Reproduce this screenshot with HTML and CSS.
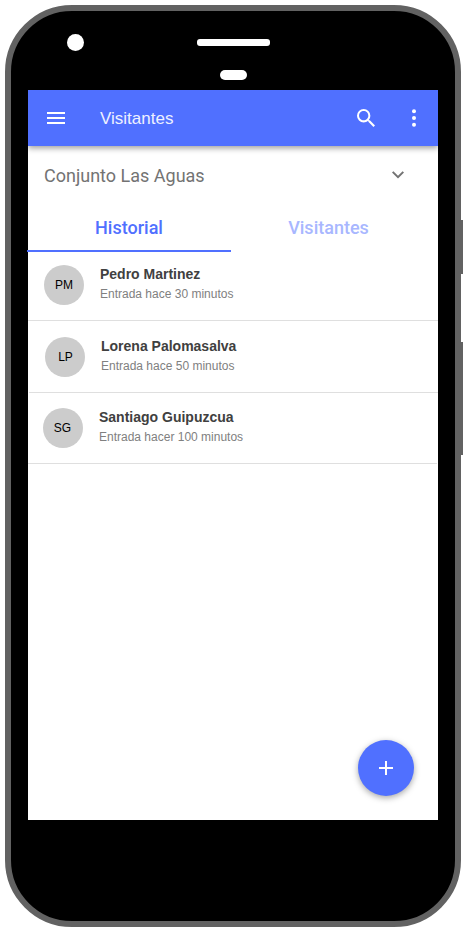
FILE: index.html
```html
<!DOCTYPE html>
<html lang="es">
<head>
<meta charset="utf-8">
<title>Visitantes</title>
<link rel="stylesheet" href="styles.css">
</head>
<body>
<div class="phone">
  <span class="side-button power"></span>
  <span class="side-button volume"></span>
  <span class="camera"></span>
  <span class="speaker"></span>
  <span class="sensor"></span>
  <main class="screen">
    <header class="appbar">
      <svg class="menu" width="18" height="12" viewBox="0 0 18 12"><path fill="#fff" d="M0 0h18v2H0zM0 5h18v2H0zM0 10h18v2H0z"/></svg>
      <h1>Visitantes</h1>
      <svg class="search" width="18" height="18" viewBox="3 3 17.49 17.49"><path fill="#fff" d="M15.5 14h-.79l-.28-.27A6.47 6.47 0 0 0 16 9.5 6.5 6.5 0 1 0 9.5 16c1.61 0 3.09-.59 4.23-1.57l.27.28v.79l5 4.99L20.49 19l-4.99-5zm-6 0C7.01 14 5 11.99 5 9.5S7.01 5 9.5 5 14 7.01 14 9.5 11.99 14 9.5 14z"/></svg>
      <svg class="more" width="4" height="18" viewBox="0 0 4 18"><g fill="#fff"><circle cx="2" cy="2.2" r="2"/><circle cx="2" cy="9" r="2"/><circle cx="2" cy="15.8" r="2"/></g></svg>
    </header>
    <div class="select">
      <span>Conjunto Las Aguas</span>
      <svg width="12" height="8" viewBox="0 0 12 8"><path d="M.7.9 6 6.2 11.3.9" fill="none" stroke="#737373" stroke-width="2"/></svg>
    </div>
    <nav class="tabs">
      <a class="tab active">Historial</a>
      <a class="tab">Visitantes</a>
    </nav>
    <ul class="list">
      <li class="row first"><span class="avatar">PM</span><div><b>Pedro Martinez</b><p>Entrada hace 30 minutos</p></div></li>
      <li class="row second"><span class="avatar">LP</span><div><b>Lorena Palomasalva</b><p>Entrada hace 50 minutos</p></div></li>
      <li class="row third"><span class="avatar">SG</span><div><b>Santiago Guipuzcua</b><p>Entrada hacer 100 minutos</p></div></li>
    </ul>
    <button class="fab" aria-label="Agregar"><svg width="14" height="14" viewBox="0 0 14 14"><path fill="#fff" d="M6 0h2v6h6v2H8v6H6V8H0V6h6z"/></svg></button>
  </main>
</div>
</body>
</html>
```
FILE: styles.css
```css
* { box-sizing: border-box; }
body { margin: 0; padding: 5px; background: #fff; font-family: "Liberation Sans", Arial, sans-serif; overflow: hidden; }
.phone { position: relative; width: 456px; height: 922px; padding: 79px 17px 0; border: 6px solid #626262; border-radius: 67px; background: #000; }
.side-button { position: absolute; right: -8px; width: 2px; background: #626262; }
.power { top: 209px; height: 54px; }
.volume { top: 331px; height: 113px; }
.camera, .speaker, .sensor { position: absolute; background: #fff; }
.camera { left: 56px; top: 23px; width: 17px; height: 17px; border-radius: 50%; }
.speaker { left: 186px; top: 28px; width: 73px; height: 7px; border-radius: 3px; }
.sensor { left: 209px; top: 59px; width: 27px; height: 10px; border-radius: 5px; }
.screen { position: relative; width: 410px; height: 730px; background: #fff; }
.appbar { position: relative; display: flex; align-items: center; height: 56px; padding: 0 22px 0 19px; background: #5070ff; box-shadow: 0 2px 6px rgba(0,0,0,.4); clip-path: inset(0 0 -12px 0); }
.appbar h1 { flex: 1; margin: 0 0 0 35px; padding-top: 2px; font-size: 17px; line-height: 20px; font-weight: 400; color: #eef1ff; }
.search { margin-right: 37px; }
.select { display: flex; justify-content: space-between; align-items: center; height: 60px; padding: 0 34px 0 16px; font: 18px/20px Roboto, sans-serif; color: #737373; }
.select svg { margin-bottom: 2px; }
.tabs { display: flex; height: 46px; margin-left: -1px; }
.tab { width: 204px; height: 46px; padding-top: 12px; text-align: center; font: 500 18px/20px Roboto, sans-serif; color: #a8b7ff; }
.tab:last-child { width: 195px; }
.active { color: #5070ff; border-bottom: 2px solid #5070ff; }
.list { margin: 0; padding: 0; list-style: none; }
.row { display: flex; height: 72px; gap: 16px; border-bottom: 1px solid #dfdfdf; padding: 16px 0 0 16px; }
.first { height: 69px; padding-top: 13px; }
.second { margin-left: 1px; }
.third { height: 71px; margin-right: 1px; padding: 15px 0 0 15px; }
.avatar { width: 40px; height: 40px; border-radius: 50%; background: #ccc; color: #000; font-size: 12px; line-height: 40px; text-align: center; }
.second .avatar { padding-left: 1px; }
.third .avatar { padding-right: 1px; }
.row b { display: block; font-size: 14px; line-height: 18px; color: #404040; }
.row p { margin: 2px 0 0; font-size: 12px; line-height: 18px; color: #808080; }
.fab { position: absolute; right: 24px; bottom: 24px; display: grid; place-items: center; width: 56px; height: 56px; padding: 0; border: 0; border-radius: 50%; background: #5070ff; box-shadow: 0 2px 6px rgba(0,0,0,.35); }
```
